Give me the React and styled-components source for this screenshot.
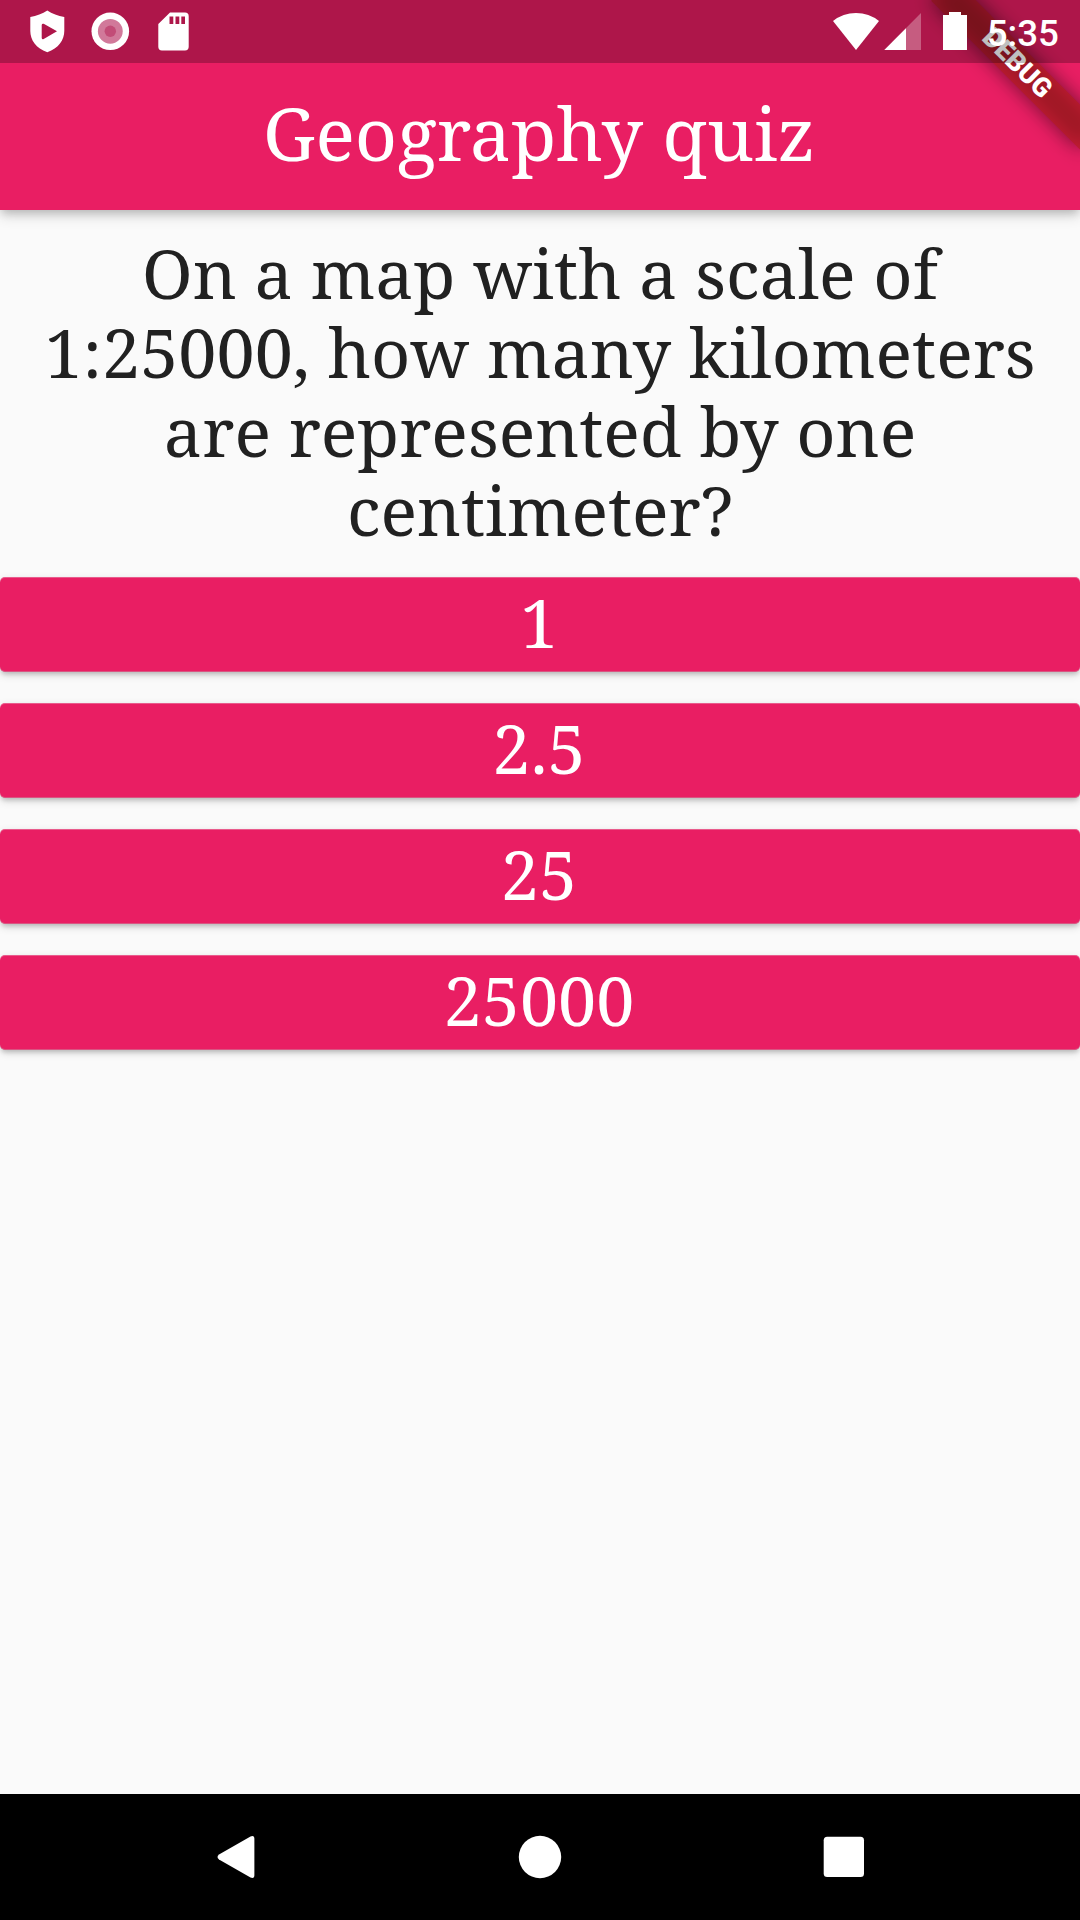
import React from "react";
import styled, { createGlobalStyle } from "styled-components";

const PINK = "#e91e63";
const SERIF = `"Noto Serif", "DejaVu Serif Condensed", "DejaVu Serif", serif`;

const GlobalStyle = createGlobalStyle`
  * { box-sizing: border-box; }
  body { margin: 0; background: #fafafa; }
`;

const Screen = styled.div`
  position: relative;
  width: 1080px;
  height: 1920px;
  overflow: hidden;
  display: flex;
  flex-direction: column;
  background: #fafafa;
  font-family: ${SERIF};
`;

const AppBar = styled.header`
  height: 210px;
  flex: none;
  padding: 63px 2px 8px 0;
  display: flex;
  align-items: center;
  justify-content: center;
  background: ${PINK};
  box-shadow: 0 5px 8px -2px rgba(0, 0, 0, 0.16), 0 6px 13px rgba(0, 0, 0, 0.14);
`;

const Title = styled.h1`
  margin: 0;
  color: #fff;
  font-size: 73.5px;
  font-weight: 400;
  line-height: 100px;
  white-space: nowrap;
`;

const StatusBar = styled.div`
  position: absolute;
  inset: 0 0 auto 0;
  height: 63px;
  display: flex;
  align-items: flex-start;
  justify-content: space-between;
  background: rgba(0, 0, 0, 0.25);
`;

const Clock = styled.span`
  padding: 12px 21px 0 0;
  color: #fff;
  font: 500 36.75px/43px Roboto, sans-serif;
`;

const StatusGroup = styled.div`
  display: flex;
`;

const BannerLayer = styled.div`
  position: absolute;
  top: 73.5px;
  left: 975px;
  width: 210px;
  height: 31.5px;
  transform-origin: 105px -73.5px;
  transform: rotate(45deg);
`;

const BannerShadow = styled.div`
  position: absolute;
  inset: 0;
  background: rgba(0, 0, 0, 0.5);
  filter: blur(10px);
`;

const BannerLabel = styled.div`
  position: relative;
  height: 100%;
  background: rgba(183, 28, 28, 0.627);
  color: #fff;
  text-align: center;
  font: 900 26.8px/31.5px Roboto, sans-serif;
`;

const Main = styled.main`
  flex: 1;
  display: flex;
  flex-direction: column;
`;

const Question = styled.p`
  margin: 0;
  padding: 23px 26px 28px;
  color: #212121;
  font-size: 68.25px;
  line-height: 79px;
  text-align: center;
`;

const Answers = styled.div`
  display: flex;
  flex-direction: column;
  gap: 31px;
`;

const Answer = styled.button`
  height: 95px;
  padding: 0 2px 6px 0;
  border: 0;
  border-radius: 5px;
  background: ${PINK};
  color: #fff;
  font: inherit;
  font-size: 68.25px;
  line-height: 89px;
  box-shadow: inset 0 1px rgba(235, 235, 235, 0.3), inset 0 -1px rgba(190, 190, 190, 0.35),
    0 4px 4px -2px rgba(0, 0, 0, 0.16), 0 3px 8px rgba(0, 0, 0, 0.15);
`;

const NavBar = styled.nav`
  height: 126px;
  flex: none;
  display: grid;
  grid-template-columns: repeat(3, 304px);
  justify-content: center;
  align-items: center;
  justify-items: center;
  background: #000;
`;

const question =
  "On a map with a scale of 1:25000, how many kilometers are represented by one centimeter?";

const answers = ["1", "2.5", "25", "25000"];

export default function App() {
  return (
    <Screen>
      <GlobalStyle />
      <AppBar>
        <Title>Geography quiz</Title>
      </AppBar>
      <Main>
        <Question>{question}</Question>
        <Answers>
          {answers.map((text) => (
            <Answer key={text}>{text}</Answer>
          ))}
        </Answers>
      </Main>
      <NavBar>
        <svg width="60" height="60" viewBox="206 1827 60 60" fill="#fff">
          <path d="M219 1854.500L250.500 1836.500Q254.400 1835 254.400 1839V1875Q254.400 1879 250.500 1877.500L219 1859.500Q216 1857 219 1854.500Z" />
        </svg>
        <svg width="60" height="60" viewBox="0 0 60 60" fill="#fff">
          <circle cx="30" cy="30" r="21.200" />
        </svg>
        <svg width="60" height="60" viewBox="0 0 60 60" fill="#fff">
          <rect x="9.700" y="9.700" width="40.300" height="40.300" rx="3.500" />
        </svg>
      </NavBar>
      <BannerLayer>
        <BannerShadow />
        <BannerLabel>DEBUG</BannerLabel>
      </BannerLayer>
      <StatusBar>
        <StatusGroup>
          <svg width="210" height="63" viewBox="0 0 210 63" fill="#fff">
            <path fillRule="evenodd" d="M47.300 10.500C52 13.700 58 15.800 64.300 17V31C64.300 40 58.500 48.500 47.300 52.200C36 48.500 30.300 40 30.300 31V17C36.500 15.800 42.500 13.700 47.300 10.500ZM41.700 25V38Q42 39.800 43.700 39L57 31.300L43.700 23.800Q42 23.200 41.700 25Z" />
            <circle cx="110.300" cy="31.300" r="18.800" />
            <circle cx="110.300" cy="31.300" r="12.400" fill="#d1799a" />
            <circle cx="110.300" cy="31.300" r="5.700" fill="#c24c77" />
            <path fillRule="evenodd" d="M170 12.600H185Q188.700 12.600 188.700 16.300V46.700Q188.700 50.400 185 50.400H162Q158.300 50.400 158.300 46.700V24ZM169.500 16.600V24H173.300V16.600ZM175.500 16.600V24H179.300V16.600ZM181.300 16.600V24H185V16.600Z" />
          </svg>
        </StatusGroup>
        <StatusGroup>
          <svg width="154" height="63" viewBox="833 0 154 63" fill="#fff">
            <path d="M833 21Q843 13 856 13Q869 13 879 21L856 50Z" />
            <path d="M921 13V50H884.300Z" opacity="0.300" />
            <path d="M906 28.300V50H884.300Z" />
            <path d="M949 12H961V15H967V50H943V15H949Z" />
          </svg>
          <Clock>5:35</Clock>
        </StatusGroup>
      </StatusBar>
    </Screen>
  );
}
